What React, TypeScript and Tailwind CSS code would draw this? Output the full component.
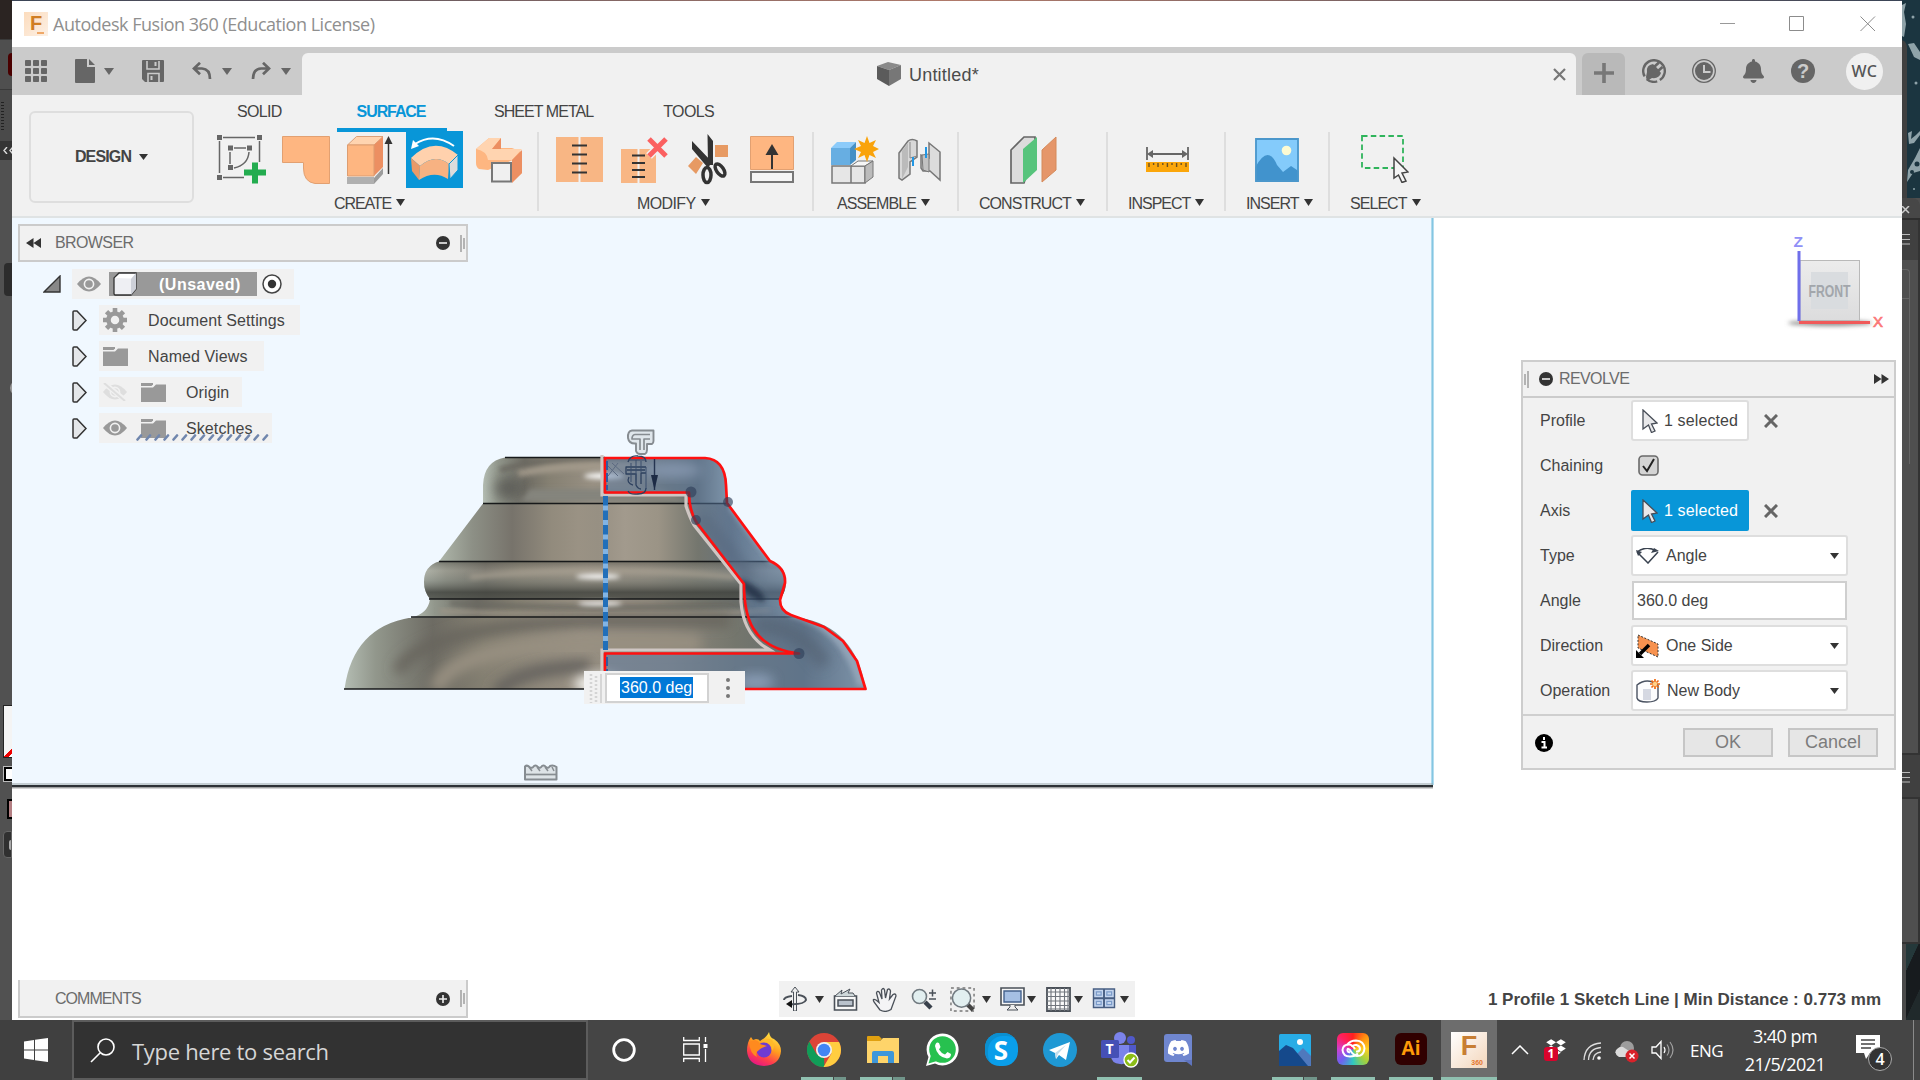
import React from "react";
import { FaDiscord, FaDropbox, FaBell } from "react-icons/fa";

type IconProps = { className?: string; box: string; children: React.ReactNode };

function Icon({ className = "", box, children }: IconProps) {
  return (
    <svg viewBox={box} className={"block shrink-0 " + className} fill="none">
      {children}
    </svg>
  );
}

function Caret({ className = "", size = "h-[7px] w-[10px]" }: { className?: string; size?: string }) {
  return (
    <svg viewBox="0 0 10 7" preserveAspectRatio="none" className={"block shrink-0 " + size + " " + className}>
      <path d="M0 0H10L5 7Z" fill="currentColor" />
    </svg>
  );
}

/* ---------- window chrome ---------- */

function TitleBar() {
  return (
    <div className="flex h-[46px] w-full shrink-0 items-center bg-white pl-3">
      <div className="relative flex h-6 w-6 shrink-0 items-start justify-center bg-gradient-to-br from-[#fcdcbd] to-[#fcf0e5]">
        <span className="mt-px font-['Liberation_Sans'] text-[20px] leading-none font-bold text-[#d07d22]">F</span>
        <span className="absolute right-[4px] bottom-[2px] h-[2px] w-[7px] bg-[#efa868]" />
      </div>
      <span className="ml-[5px] font-['Open_Sans',sans-serif] text-[18px] tracking-[-0.48px] whitespace-nowrap text-[#8f8f8f]">
        Autodesk Fusion 360 (Education License)
      </span>
      <div className="ml-auto flex items-center pr-[26px]">
        <Icon box="0 0 16 16" className="h-4 w-4">
          <path d="M0 7.5H15" stroke="#999" />
        </Icon>
        <Icon box="0 0 16 16" className="ml-[53px] h-4 w-4">
          <path d="M.5 .5H14.5V14.5H.5Z" stroke="#8c8c8c" />
        </Icon>
        <Icon box="0 0 16 16" className="ml-[55px] h-4 w-4">
          <path d="M.5 .5L15 15M15 .5L.5 15" stroke="#8c8c8c" />
        </Icon>
      </div>
    </div>
  );
}

function TabStrip() {
  const cells = [0, 8, 16];
  return (
    <div className="flex h-12 w-full shrink-0 items-end bg-[#cbcbcb] text-[#666]">
      <div className="flex h-12 w-[290px] items-center pl-[13px]">
        <Icon box="0 0 22 22" className="h-[22px] w-[22px]">
          {cells.map((y) => cells.map((x) => <rect key={x + "-" + y} x={x} y={y} width="6" height="6" rx=".8" fill="#666" />))}
        </Icon>
        <Icon box="0 0 20 24" className="ml-[28px] h-6 w-5">
          <path d="M1 0H12V8H20V23Q20 24 19 24H1Q0 24 0 23V1Q0 0 1 0ZM14 0L20 6H14Z" fill="#666" />
        </Icon>
        <Caret className="ml-[9px]" />
        <Icon box="0 0 22 22" className="ml-[28px] h-[22px] w-[22px]">
          <path d="M1 0H21Q22 0 22 1V21Q22 22 21 22H3L0 19V1Q0 0 1 0Z" fill="#666" />
          <path d="M5 1V9H17V1M6 22V13.5H17V22" stroke="#cbcbcb" strokeWidth="1.6" />
          <rect x="12.5" y="2" width="2" height="4" fill="#cbcbcb" />
          <rect x="8.5" y="16" width="2" height="4" fill="#cbcbcb" />
        </Icon>
        <Icon box="0 0 20 18" className="ml-[28px] h-[18px] w-5">
          <path d="M8 .8L2 6.5L8 12.2M2.5 6.5H10Q18 7 18 17" stroke="#666" strokeWidth="2.7" />
        </Icon>
        <Caret className="ml-[10px]" />
        <Icon box="0 0 20 18" className="ml-[19px] h-[18px] w-5">
          <path d="M12 .8L18 6.5L12 12.2M17.5 6.5H10Q2 7 2 17" stroke="#666" strokeWidth="2.7" />
        </Icon>
        <Caret className="ml-[10px]" />
      </div>
      <div className="flex h-[42px] w-[1274px] items-center rounded-t-md bg-[#f1f1f1] pl-[575px]">
        <Icon box="0 0 24 24" className="h-6 w-6">
          <path d="M0 4L11 0L24 3L12 8Z" fill="#8a8a8a" />
          <path d="M0 4L12 8V24L0 17Z" fill="#5b5b5b" />
          <path d="M12 8L24 3V17L12 24Z" fill="#777" />
        </Icon>
        <span className="mt-[2px] ml-2 font-['Liberation_Sans',sans-serif] text-[18px] tracking-[0.2px] text-[#4b4b4b]">Untitled*</span>
        <Icon box="0 0 13 13" className="mr-[10px] ml-auto h-[13px] w-[13px]">
          <path d="M1 1L12 12M12 1L1 12" stroke="#777" strokeWidth="2.2" />
        </Icon>
      </div>
      <div className="ml-[6px] flex h-[42px] w-[43px] items-center justify-center rounded-t-md bg-[#b9b9b9]">
        <Icon box="0 0 20 20" className="mb-[2px] h-5 w-5">
          <path d="M10 0V20M0 10H20" stroke="#777" strokeWidth="3.6" />
        </Icon>
      </div>
      <div className="flex h-12 items-center pl-[17px]">
        <Icon box="0 0 24 24" className="h-6 w-6">
          <circle cx="12" cy="12" r="10.800" stroke="#666" strokeWidth="2.400" strokeDasharray="50 3 11 4" transform="rotate(150 12 12)" />
          <path d="M5 13Q4 6 11 5L15 9L19 14Q17 20 10 19L5 22L4 18Z" fill="#666" />
          <path d="M12 8L17 3.500M16 12L20.500 8" stroke="#666" strokeWidth="2.600" />
        </Icon>
        <Icon box="0 0 24 24" className="ml-[26px] h-6 w-6">
          <circle cx="12" cy="12" r="11.3" stroke="#666" strokeWidth="1.3" />
          <circle cx="12" cy="12" r="9" fill="#666" />
          <path d="M12 6V13H18.5" stroke="#cbcbcb" strokeWidth="2" />
        </Icon>
        <FaBell className="ml-[27px] h-6 w-[21px] text-[#666]" />
        <div className="ml-[27px] flex h-6 w-6 items-center justify-center rounded-full bg-[#666] font-['Liberation_Sans'] text-[20px] leading-none font-bold text-[#cbcbcb]">
          ?
        </div>
        <div className="ml-[31px] flex h-[37px] w-[37px] items-center justify-center rounded-full bg-[#f0f0f0] font-['Noto_Sans'] text-[16px] font-medium tracking-[0.5px] text-[#555]">
          WC
        </div>
      </div>
    </div>
  );
}

/* ---------- ribbon ---------- */

function Label({ className, children }: { className: string; children: string }) {
  return (
    <div className={"mt-[6px] flex shrink-0 items-center gap-[5px] font-['Liberation_Sans',sans-serif] text-[16px] leading-5 whitespace-nowrap text-[#444] " + className}>
      <span>{children}</span>
      <Caret className="-mt-[4px] text-[#333]" size="h-[7px] w-[9px]" />
    </div>
  );
}

function Tools({ className, children }: { className: string; children: React.ReactNode }) {
  return <div className={"-mt-px flex h-[57px] shrink-0 items-center " + className}>{children}</div>;
}

function Ribbon() {
  return (
    <div className="flex h-[123px] w-full shrink-0 border-b-2 border-[#dfe3e4] bg-[#f1f1f1]">
      <div className="mt-[16px] ml-[17px] flex h-[92px] w-[165px] shrink-0 items-center justify-center rounded-md border-2 border-[#dedede]">
        <span className="font-['Liberation_Sans',sans-serif] text-[16px] font-bold tracking-[-0.85px] text-[#444]">DESIGN</span>
        <Caret className="ml-[8px] text-[#333]" size="h-[6px] w-[9px]" />
      </div>
      <div className="flex flex-col">
        <div className="flex h-[37px] pt-[7px] font-['Liberation_Sans',sans-serif] text-[16px] leading-5 whitespace-nowrap text-[#444]">
          <span className="ml-[43px] w-[100px] shrink-0 tracking-[-0.7px]">SOLID</span>
          <div className="flex h-[30px] w-[110px] shrink-0 justify-center border-b-4 border-[#0896d8] font-bold tracking-[-1.1px] text-[#0896d8]">
            <span className="-ml-[2px]">SURFACE</span>
          </div>
          <span className="ml-[47px] tracking-[-0.95px]">SHEET METAL</span>
          <span className="ml-[70px] tracking-[-0.6px]">TOOLS</span>
        </div>
        <div className="flex h-[84px]">
          {/* create */}
          <div className="flex h-[79px] w-[345px] flex-col border-r-2 border-[#dedede]">
            <Tools className="pl-[23px]">
              <Icon box="0 0 49 49" className="h-[49px] w-[49px]">
                <path d="M6 2.500H38M2.500 6V38M42.500 6V27M6 42.500H27M17 13H29M13 17V29M32 17Q31 30 17 33" stroke="#666" strokeWidth="1.500" />
                <path d="M0 0h5v5H0zM40 0h5v5H40zM0 40h5v5H0zM11 10.500h5v5h-5zM30 10.500h5v5h-5zM11 30h5v5h-5z" fill="#666" />
                <path d="M35 27.500h6v7h8v6h-8v8h-6v-8h-8v-6h8z" fill="#23ac4f" />
              </Icon>
              <Icon box="0 0 48 48" className="ml-[16px] h-12 w-12">
                <path d="M.5 .5H47.500V47.500H33Q21.500 46 21.500 32V26.500H.5Z" fill="#feb681" stroke="#e2a071" />
              </Icon>
              <Icon box="0 0 48 48" className="ml-[17px] h-12 w-12">
                <path d="M0 42H27L36 32V38L27 48H0Z" fill="#9c9c9c" />
                <path d="M0 41H27V48H0Z" fill="#b0b0b0" />
                <path d="M.5 9L9.500 .5H36L27 9Z" fill="#ffd4b0" stroke="#dca079" />
                <path d="M27 9L36 .5V31L27 40Z" fill="#ec8f62" />
                <path d="M.5 9H27V40H.5Z" fill="#feb681" stroke="#dd9d70" />
                <path d="M41.500 38V5" stroke="#333" strokeWidth="1.500" />
                <path d="M37.500 8L41.500 0L45.500 8Z" fill="#333" />
              </Icon>
              <div className="ml-[11px] flex h-[57px] w-[57px] items-center justify-center bg-[#0896d8]">
                <Icon box="0 0 49 45" className="h-[45px] w-[49px]">
                  <path d="M1 21Q24 -2 48 18L39 27Q25 16 10 29Z" fill="#ffd1ad" />
                  <path d="M1 21L10 29L9 43L2 34Z" fill="#ea9a68" />
                  <path d="M10 29Q25 16 39 27L38 42Q24 33 9 43Z" fill="#f7b282" />
                  <path d="M39 27L48 18V33L40 42Z" fill="#dcdcdc" stroke="#0896d8" />
                  <path d="M44 9Q24 -5 5 7" stroke="white" strokeWidth="2" />
                  <path d="M1 12L3 3L9 9Z" fill="white" />
                </Icon>
              </div>
              <Icon box="0 0 46 46" className="ml-[13px] h-[46px] w-[46px]">
                <path d="M0 12L13 1L25 1V11H36L46 15V36L37 44V23L12 33L3 32Q0 30 0 26Z" fill="#feb681" />
                <path d="M0 12L13 1H25L16 12H46L36 23H12Q11 14 0 12Z" fill="#ffd4b0" />
                <path d="M25 1V12H16ZM36 23L46 13V36L36 46Z" fill="#ec8f62" />
                <path d="M16 26H35V44.500H16Z" fill="#f0f0f0" stroke="#777" strokeWidth="2" />
              </Icon>
            </Tools>
            <Label className="ml-[140px] tracking-[-1.1px]">CREATE</Label>
          </div>
          {/* modify */}
          <div className="flex h-[79px] w-[275px] flex-col border-r-2 border-[#dedede]">
            <Tools className="pl-[17px]">
              <Icon box="0 0 47 45" className="h-[45px] w-[47px]">
                <path d="M0 0H22.500V45H0ZM24.500 0H47V45H24.500Z" fill="#f8b684" />
                <path d="M16 8.500H31M16 17.500H31M16 26.500H31M16 35.500H31" stroke="#333" strokeWidth="2" />
              </Icon>
              <Icon box="0 0 47 47" className="ml-[18px] h-[47px] w-[47px]">
                <path d="M0 13H16.500V47H0ZM18.500 13H35V47H18.500Z" fill="#f8b684" />
                <path d="M11 19.500H24M11 27H24M11 34H24M11 41H24" stroke="#333" strokeWidth="2" />
                <path d="M28 3L45 20M45 3L28 20" stroke="#f1f1f1" strokeWidth="8" />
                <path d="M28 3L45 20M45 3L28 20" stroke="#fb6060" strokeWidth="5" />
              </Icon>
              <Icon box="0 0 42 52" className="ml-[20px] h-[52px] w-[42px]">
                <path d="M27 11H40V23H27ZM8 23L15 29L8 40L0 32Z" fill="#e79a63" />
                <path d="M19.500 0L25 7V31H20ZM4 7L24 28L20 34L4 15Z" fill="#333" />
                <ellipse cx="19" cy="41" rx="4" ry="7.500" stroke="#333" strokeWidth="3.500" />
                <ellipse cx="32" cy="36" rx="3.500" ry="7" stroke="#333" strokeWidth="3.500" transform="rotate(-35 32 36)" />
              </Icon>
              <Icon box="0 0 44 47" className="ml-[20px] h-[47px] w-11">
                <path d="M.5 .5H43.500V33.500H.5Z" fill="#feb681" stroke="#e2a071" />
                <path d="M1 36H43V46H1Z" fill="#f5f5f5" stroke="#777" strokeWidth="2" />
                <path d="M22 33V14" stroke="#333" strokeWidth="2" />
                <path d="M15.500 19L22 8L28.500 19Z" fill="#333" />
              </Icon>
            </Tools>
            <Label className="ml-[98px] tracking-[-0.6px]">MODIFY</Label>
          </div>
          {/* assemble */}
          <div className="flex h-[79px] w-[145px] flex-col border-r-2 border-[#dedede]">
            <Tools className="pl-[17px]">
              <Icon box="0 0 48 48" className="h-12 w-12">
                <path d="M1 30H20V47H1ZM20 30H34V47H20Z" fill="#e6e6e6" stroke="#777" strokeWidth="1.500" />
                <path d="M20 30L27 25H42L34 30Z" fill="#f6f6f6" stroke="#777" />
                <path d="M34 30L42 25V41L34 47Z" fill="#bbb" stroke="#777" />
                <path d="M0 12H19V29H0Z" fill="#67aee2" />
                <path d="M0 12L6 6H25L19 12Z" fill="#8ccbfa" />
                <path d="M19 12L25 6V24L19 29Z" fill="#4590c6" />
                <path d="M36 0L38.500 7L45 4L42 10L48 13L42 16L45 22L38.500 19L36 26L33.500 19L27 22L30 16L23 13L30 10L27 4L33.500 7Z" fill="#f9a30b" />
              </Icon>
              <Icon box="0 0 43 44" className="ml-[19px] h-11 w-[43px]">
                <path d="M1 15L10 3Q14 0 19 3V19L12 24V36L4 42L1 40Z" fill="#d8d8d8" stroke="#777" strokeWidth="1.500" />
                <path d="M10 5V29L4 41V13Z" fill="#bbb" />
                <path d="M12 4V20L19 18" stroke="#888" />
                <path d="M31 5L42 14V42L32 33H25L23 30V17L31 20Z" fill="#dcdcdc" stroke="#777" strokeWidth="1.500" />
                <path d="M24 17L31 16V34L25 32Z" fill="#c2c2c2" stroke="#777" />
                <path d="M15 19V28M28 9V20" stroke="#2196e3" strokeWidth="2" />
              </Icon>
            </Tools>
            <Label className="ml-[23px] tracking-[-0.9px]">ASSEMBLE</Label>
          </div>
          {/* construct */}
          <div className="flex h-[79px] w-[149px] flex-col border-r-2 border-[#dedede]">
            <Tools className="pl-[51px]">
              <Icon box="0 0 47 48" className="h-12 w-[47px]">
                <path d="M1 14L14 1H25V14L14 47H1Z" fill="#dcdcdc" stroke="#666" strokeWidth="1.700" />
                <path d="M13 13L27 1V34L13 47Z" fill="#57c47c" />
                <path d="M32 14L46 1V34L32 46Z" fill="#e5966a" stroke="#d58a5a" />
              </Icon>
            </Tools>
            <Label className="ml-[20px] tracking-[-0.95px]">CONSTRUCT</Label>
          </div>
          {/* inspect */}
          <div className="flex h-[79px] w-[118px] flex-col border-r-2 border-[#dedede]">
            <Tools className="pl-[38px]">
              <Icon box="0 0 43 25" className="h-[25px] w-[43px]">
                <path d="M1 0V13M42 0V13M3 7H40" stroke="#666" strokeWidth="1.800" />
                <path d="M1 7L7 3V11ZM42 7L36 3V11Z" fill="#666" />
                <path d="M0 15H43V25H0Z" fill="#fba60a" />
                <path d="M3 16V20M7.600 16V18M12 16V20M16.800 16V18M21.400 16V20M26 16V18M30.600 16V20M35.200 16V18M40 16V20" stroke="#6b5020" strokeWidth="1.400" />
              </Icon>
            </Tools>
            <Label className="ml-[20px] tracking-[-1px]">INSPECT</Label>
          </div>
          {/* insert */}
          <div className="flex h-[79px] w-[104px] flex-col border-r-2 border-[#dedede]">
            <Tools className="pl-[29px]">
              <Icon box="0 0 44 44" className="h-11 w-11">
                <path d="M.5 .5H43.500V43.500H.5Z" fill="#84cbfb" />
                <path d="M.5 29Q13 6 22 27L28 34L36 28L43.500 33V43.500H.5Z" fill="#4193cd" />
                <path d="M1 1H43V43H1Z" stroke="#4b97cb" strokeWidth="1.800" />
                <circle cx="31.500" cy="12.500" r="4.800" fill="#fdfbd3" />
              </Icon>
            </Tools>
            <Label className="ml-[20px] tracking-[-0.95px]">INSERT</Label>
          </div>
          {/* select */}
          <div className="flex h-[79px] w-[130px] flex-col">
            <Tools className="pl-[31px]">
              <Icon box="0 0 48 48" className="mb-px h-12 w-12">
                <path d="M1 1H42V33H1Z" stroke="#2fb45b" strokeWidth="1.800" strokeDasharray="5.500 3.300" />
                <path d="M33 23L47 37L41 38L45 46L41 47.500L37.500 40L33 43Z" fill="#f5f5f5" stroke="#444" strokeWidth="1.500" />
              </Icon>
            </Tools>
            <Label className="ml-[20px] tracking-[-0.95px]">SELECT</Label>
          </div>
        </div>
      </div>
    </div>
  );
}

/* ---------- canvas drawing ---------- */

const BODY =
  "M505 457.500Q484 461 483 485V503.500L439 561.500Q424 566 424 582Q424 592 430 599Q428 614 411 617.500Q353 627 344.500 689H865.500Q856 627 799 617.500Q782 614 780 599Q786 592 786 582Q786 566 771 561.500L727 503.500V485Q726 461 705 457.500Z";
const OUTER = "L705 458Q725 459 726 485L727 503L770 561Q786 568 785 583L780 600Q780 611 791 615L824 627L843 641L857 661L865.500 689";
const INNER = "L799 653.500C750 648 744 615 744 584L697 523Q689 511 689 492.500H605";

function ModelDrawing() {
  return (
    <svg viewBox="12 218 1890 802" className="absolute inset-0 h-full w-full">
      <defs>
        <linearGradient id="metal">
          <stop offset="0" stopColor="#b4bdb3" />
          <stop offset=".06" stopColor="#92978c" />
          <stop offset=".17" stopColor="#6d6b63" />
          <stop offset=".27" stopColor="#858072" />
          <stop offset=".45" stopColor="#989083" />
          <stop offset=".62" stopColor="#8e887c" />
          <stop offset=".75" stopColor="#74766d" />
          <stop offset=".88" stopColor="#666d6e" />
          <stop offset="1" stopColor="#9eaaab" />
        </linearGradient>
        <linearGradient id="cone">
          <stop offset="0" stopColor="#aeb6aa" />
          <stop offset=".1" stopColor="#8d9086" />
          <stop offset=".22" stopColor="#77736b" />
          <stop offset=".34" stopColor="#928b7d" />
          <stop offset=".42" stopColor="#9a9284" />
          <stop offset=".48" stopColor="#979083" />
          <stop offset=".56" stopColor="#a29a8d" />
          <stop offset=".66" stopColor="#9b9486" />
          <stop offset=".78" stopColor="#74766e" />
          <stop offset=".88" stopColor="#6a7379" />
          <stop offset="1" stopColor="#9aa6a7" />
        </linearGradient>
        <linearGradient id="bulge" x2="0" y2="1">
          <stop offset="0" stopColor="#55544c" stopOpacity=".5" />
          <stop offset=".25" stopColor="#a7a095" stopOpacity=".35" />
          <stop offset=".5" stopColor="#7d7f77" stopOpacity=".5" />
          <stop offset=".8" stopColor="#42443f" stopOpacity=".85" />
          <stop offset="1" stopColor="#4b4d47" stopOpacity=".8" />
        </linearGradient>
        <clipPath id="body">
          <path d={BODY} />
        </clipPath>
        <clipPath id="profile">
          <path d={"M605 458" + OUTER + "H605V653.500" + INNER + "Z"} />
        </clipPath>
        <filter id="soft" x="-50%" y="-50%" width="200%" height="200%">
          <feGaussianBlur stdDeviation="6" />
        </filter>
        <filter id="glow" x="-50%" y="-100%" width="200%" height="300%">
          <feGaussianBlur stdDeviation="2.500" />
        </filter>
      </defs>
      <rect x="12" y="218" width="1421" height="568" fill="#f0f8ff" />
      <path d="M1432.500 218V785" stroke="#84c6e2" strokeWidth="2.200" />
      <path d="M12 784H1433" stroke="#9aa5a8" strokeWidth="1" />
      <path d="M12 786.200H1433" stroke="#2e3236" strokeWidth="2.600" />
      <path d="M12 788H1433" stroke="#aaa" />

      <g clipPath="url(#body)">
        <rect x="483" y="457" width="244" height="47" fill="url(#metal)" />
        <path d="M500 470Q550 456 640 459" stroke="#6b6860" strokeWidth="5" filter="url(#glow)" fill="none" />
        <path d="M518 474Q560 464 640 467" stroke="#a39a8b" strokeWidth="7" filter="url(#glow)" fill="none" />
        <ellipse cx="509" cy="488" rx="14" ry="12" fill="#5c5c57" opacity=".85" filter="url(#soft)" />
        <path d="M530 489H660L690 502H520Z" fill="#84847d" filter="url(#glow)" />
        <ellipse cx="604" cy="476" rx="20" ry="3" fill="white" filter="url(#glow)" />
        <rect x="439" y="504" width="332" height="58" fill="url(#cone)" />
        <rect x="424" y="561" width="362" height="39" fill="url(#metal)" />
        <rect x="424" y="561" width="362" height="39" fill="url(#bulge)" />
        <path d="M470 577Q600 565 735 577" stroke="#a59e90" strokeWidth="4" filter="url(#glow)" fill="none" />
        <ellipse cx="598" cy="576.500" rx="22" ry="2.600" fill="white" filter="url(#glow)" />
        <rect x="411" y="599" width="389" height="19" fill="url(#metal)" />
        <path d="M440 611Q600 619 770 611" stroke="#a09889" strokeWidth="4" filter="url(#glow)" fill="none" />
        <path d="M450 603Q600 612 750 603" stroke="#696860" strokeWidth="4" filter="url(#glow)" fill="none" />
        <ellipse cx="600" cy="603.500" rx="22" ry="2" fill="white" filter="url(#glow)" />
        <rect x="344" y="618" width="522" height="72" fill="url(#metal)" />
        <path d="M398 672Q422 624 600 621H730" stroke="#68655d" strokeWidth="12" filter="url(#soft)" fill="none" />
        <path d="M436 690Q450 644 605 643H700" stroke="#989081" strokeWidth="15" filter="url(#soft)" fill="none" />
        <path d="M496 694Q516 668 590 666" stroke="#66645e" strokeWidth="14" filter="url(#soft)" fill="none" />
        <ellipse cx="598" cy="684" rx="24" ry="10" fill="#f6f5f1" filter="url(#soft)" />
      </g>
      <path d="M505 457.500H605M483 503.500H726M439 561.500H770M429 599H780M411 617H795M344 689H605" stroke="#17191a" strokeWidth="1.600" />
      <g clipPath="url(#profile)">
        <rect x="600" y="450" width="270" height="245" fill="#597ba8" fillOpacity=".48" />
        <ellipse cx="672" cy="470" rx="30" ry="7" fill="#8596ae" filter="url(#soft)" />
        <path d="M732 505L775 562M790 612Q845 625 862 685" stroke="#9aaabd" strokeWidth="9" opacity=".8" fill="none" filter="url(#glow)" />
        <path d="M700 515L752 580" stroke="#55657a" strokeWidth="14" opacity=".5" fill="none" filter="url(#soft)" />
        <ellipse cx="752" cy="591" rx="16" ry="5" fill="#1f2b40" opacity=".75" transform="rotate(38 752 591)" filter="url(#glow)" />
        <path d="M755 625Q800 625 825 665" stroke="#556375" strokeWidth="16" opacity=".7" fill="none" filter="url(#soft)" />
        <ellipse cx="756" cy="682" rx="18" ry="8" fill="#93a6c0" opacity=".8" filter="url(#soft)" />
      </g>

      <path d="M602 455V495H686V506Q690 518 694 525L741 584V602Q743 630 762 645L770 650H602V672" fill="none" stroke="#cfc6c3" strokeWidth="3.200" />
      <path d={"M605 689V653.500" + INNER + "V458" + OUTER + "H745"} fill="none" stroke="#ff1010" strokeWidth="2.700" strokeLinejoin="round" />
      <path d="M605.500 496V650" stroke="#82b4e4" strokeWidth="5" />
      <path d="M605.500 496V650" stroke="#226fb9" strokeWidth="5" strokeDasharray="9.500 5" />
      <path d="M607 461V490M607 657V672" stroke="#315ba0" strokeWidth="2" strokeDasharray="9 3" />
      <g fill="#2f3f59" fillOpacity=".65">
        <circle cx="691" cy="492" r="5.500" />
        <circle cx="696" cy="520" r="5" />
        <circle cx="728" cy="502" r="5" />
        <circle cx="799" cy="653.500" r="5.500" />
      </g>

      {/* sketch constraint glyphs */}
      <g strokeLinejoin="round" fill="none">
        <path d="M653.500 430.500H632Q627.500 431 628 438Q629 444 636 443.500V451Q637 454 640 454H645Q647 453 647 450V444H652Q653.500 443 653.500 441Z" fill="#dfe6eb" stroke="#868c91" strokeWidth="1.900" />
        <path d="M650 434.500H635Q632 435 632 439H640V450M650 439H644V450" stroke="#868c91" strokeWidth="1.700" />
        <path d="M628 462Q630 455 638 456Q646 456 646 462M646 467H626V474H636V485Q638 489 641 489M646 473H641V484M628 491Q630 495 638 494Q646 494 646 488M627 470H645M629 477Q626 483 633 485" stroke="#2d405e" strokeWidth="1.300" />
        <path d="M628 460H646M631 463V482M636 460V480M641 461V472M646 467V489" stroke="#3b4e6d" strokeWidth="1" />
        <path d="M654.500 459V490" stroke="#253450" strokeWidth="1.400" />
        <path d="M651 475H658L654.500 490Z" fill="#1d2b45" />
        <path d="M608 466L618 476M612 463L624 474M618 463L608 476" stroke="#5c6a81" />
        <path d="M525 766.500Q527 764.500 529.500 767Q532 769 534 766Q536 764.500 538 767Q540 769 542 766Q544 764.500 546 767Q548 769 550 766Q553 764.500 556.500 767V779.500H525Z" fill="#dde3e7" stroke="#868c91" strokeWidth="2" />
        <path d="M526 774.500H556" stroke="#868c91" strokeWidth="1.700" />
        <path d="M529 767L532 771M537 767L540 771M545 767L548 771M552 767L554 771" stroke="#868c91" strokeWidth="1.500" />
      </g>
    </svg>
  );
}

/* ---------- panels ---------- */

function RoundMark({ plus = false }: { plus?: boolean }) {
  return (
    <Icon box="0 0 14 14" className="h-[14px] w-[14px]">
      <circle cx="7" cy="7" r="7" fill="#333" />
      <path d={plus ? "M3 7H11M7 3V11" : "M3 7H11"} stroke="#f1f1f1" strokeWidth="1.600" />
    </Icon>
  );
}

function Grip({ className = "" }: { className?: string }) {
  return (
    <Icon box="0 0 5 17" className={"h-[17px] w-[5px] " + className}>
      <path d="M1 0V17M4 3V14" stroke="#8a8a8a" strokeWidth="1.200" />
    </Icon>
  );
}

function Eye({ off = false }: { off?: boolean }) {
  const tone = off ? "#dedede" : "#999";
  return (
    <Icon box="0 0 24 18" className="h-[18px] w-6">
      <path d="M0 9Q12 -6 24 9Q12 24 0 9Z" fill={tone} />
      <circle cx="12" cy="9" r="4.600" stroke="#f1f1f1" strokeWidth="1.600" />
      {off && <path d="M1 0L23 18" stroke="#f1f1f1" strokeWidth="5" />}
      {off && <path d="M1 0L22 18" stroke="#dedede" strokeWidth="2" />}
    </Icon>
  );
}

function Folder() {
  return (
    <Icon box="0 0 25 20" className="h-5 w-[25px]">
      <path d="M0 1H12V2.500L10.500 4H0Z" fill="#999" />
      <path d="M0 5.500H12L15 2.500H25V20H0Z" fill="#999" />
    </Icon>
  );
}

function Gear() {
  return (
    <Icon box="-12 -12 24 24" className="mr-px h-6 w-6">
      <circle r="6.500" stroke="#999" strokeWidth="4.500" />
      {[0, 45, 90, 135].map((a) => (
        <path key={a} d="M0 -12V-7M0 7V12" stroke="#999" strokeWidth="4.600" transform={`rotate(${a})`} />
      ))}
    </Icon>
  );
}

function Branch({ width, text, icons, children }: { width: string; text: string; icons: React.ReactNode; children?: React.ReactNode }) {
  return (
    <div className="mb-[6px] flex h-[30px] items-center pl-[54px]">
      <Icon box="0 0 15 21" className="h-[21px] w-[15px]">
        <path d="M1 2Q1 1 2 1H5L14 10.500L5 20H2Q1 20 1 19Z" fill="#e4e7ea" stroke="#333" strokeWidth="1.500" />
      </Icon>
      <div className={"relative ml-3 flex h-[30px] items-center bg-[#f1f1f1] pl-1 " + width}>
        {icons}
        <span className="mt-px ml-[20px] font-['Liberation_Sans',sans-serif] text-[16px] tracking-[0.1px] whitespace-nowrap text-[#444]">{text}</span>
        {children}
      </div>
    </div>
  );
}

function BrowserColumn() {
  return (
    <div className="relative flex h-full w-[456px] shrink-0 flex-col pt-[6px] pl-[6px]">
      <div className="flex h-[38px] shrink-0 items-center border-2 border-[#cbcbcb] bg-[#f1f1f1] pl-[6px]">
        <Icon box="0 0 15 10" className="h-[10px] w-[15px]">
          <path d="M7.500 0V10L0 5ZM15 0V10L7.500 5Z" fill="#333" />
        </Icon>
        <span className="ml-[14px] font-['Liberation_Sans',sans-serif] text-[16px] tracking-[-0.6px] text-[#6c6c6c]">BROWSER</span>
        <div className="ml-auto flex items-center">
          <RoundMark />
          <Grip className="mr-px ml-[10px]" />
        </div>
      </div>
      <div className="mt-[7px] mb-[6px] flex h-[30px] items-center pl-[25px]">
        <Icon box="0 0 18 18" className="h-[18px] w-[18px]">
          <path d="M17 1V17H1Z" fill="#888" stroke="#333" strokeWidth="1.400" />
        </Icon>
        <div className="ml-[11px] flex h-[30px] w-[222px] items-center bg-[#f1f1f1] pl-[5px]">
          <Eye />
          <div className="ml-[8px] flex h-6 w-[148px] items-center bg-[#999] pl-1">
            <Icon box="0 0 24 24" className="h-6 w-6">
              <path d="M1 6L6 1H23V17L18 23H2L1 22Z" fill="#eeeff3" stroke="#333" strokeWidth="1.300" />
              <path d="M18 7L23 1V17L18 23Z" fill="#cdd0d8" />
              <path d="M2 6L7 2H22L18 6.500Z" fill="white" />
            </Icon>
            <span className="mt-px ml-[22px] font-['Liberation_Sans',sans-serif] text-[16px] font-bold tracking-[0.5px] text-white">(Unsaved)</span>
          </div>
          <Icon box="0 0 20 20" className="ml-[5px] h-5 w-5">
            <circle cx="10" cy="10" r="9" fill="white" stroke="#444" strokeWidth="1.500" />
            <circle cx="10" cy="10" r="4.200" fill="#333" />
          </Icon>
        </div>
      </div>
      <Branch width="w-[201px]" text="Document Settings" icons={<Gear />} />
      <Branch width="w-[165px]" text="Named Views" icons={<Folder />} />
      <Branch width="w-[143px]" text="Origin" icons={<><Eye off /><span className="w-[14px]" /><Folder /></>} />
      <Branch width="w-[173px]" text="Sketches" icons={<><Eye /><span className="w-[14px]" /><Folder /></>}>
        <svg viewBox="0 0 133 7" className="absolute bottom-[2px] left-[37px] h-[7px] w-[133px]">
          {Array.from({ length: 15 }, (_, i) => (
            <path key={i} d={`M${i * 9 + 1.5} 5.500L${i * 9 + 5} 1.500`} stroke="#7086ad" strokeWidth="2.600" strokeLinecap="round" />
          ))}
        </svg>
      </Branch>
      <div className="mt-auto mb-[2px] flex h-[38px] items-center border-x-2 border-b-2 border-[#cbcbcb] bg-[#f1f1f1] pl-[35px]">
        <span className="mt-[2px] font-['Liberation_Sans',sans-serif] text-[16px] tracking-[-0.95px] text-[#6c6c6c]">COMMENTS</span>
        <div className="ml-auto flex items-center pt-px">
          <RoundMark plus />
          <Grip className="mr-px ml-[10px]" />
        </div>
      </div>
    </div>
  );
}

function NavToolbar() {
  const stroke = "#4a5058";
  return (
    <div className="mb-[3px] ml-[311px] flex h-9 w-[356px] shrink-0 items-center self-end bg-[#f1f1f1] pl-1 text-[#333]">
      <Icon box="0 0 24 24" className="h-6 w-6">
        <path d="M10.500 24V5H8L12 0L16 5H13.500V24Z" fill="#eee" stroke={stroke} />
        <path d="M15 8Q23 9 23 13Q21 18 5 17M9 9Q1 10 1 13" stroke={stroke} strokeWidth="2" />
        <path d="M3 17L9 13V21Z" fill="#111" />
      </Icon>
      <Caret className="ml-[8px]" size="h-[7px] w-[9px]" />
      <Icon box="0 0 25 25" className="ml-[9px] h-[25px] w-[25px]">
        <path d="M1.500 9H23.500V23H1.500Z" fill="#f8f8f8" stroke={stroke} strokeWidth="1.600" />
        <path d="M2 9L9 3L8 7L17 2L15 6H20L22 9" fill="#cfd8da" stroke={stroke} />
        <path d="M5 13H20V19H5Z" fill="#b9c2cc" stroke={stroke} strokeWidth="1.500" />
      </Icon>
      <Icon box="0 0 25 25" className="ml-[14px] h-[25px] w-[25px]">
        <path d="M8 23L2 15Q0 11 4 13L7 15.500L4.500 6Q5.500 3 7.500 5.500L10 12L9.500 3Q11.500 0 12.500 3L13.500 11L15.500 2.500Q17.500 1 18.500 4L17.500 12L21 7.500Q24 6 24 9L19 22.500Q14 26 8 23Z" fill="#f4f4f6" stroke={stroke} strokeWidth="1.300" />
      </Icon>
      <Icon box="0 0 25 24" className="ml-[14px] h-6 w-[25px]">
        <path d="M14 15L20 21" stroke="#39414c" strokeWidth="4.500" />
        <circle cx="8.500" cy="9.500" r="7" fill="#e2eff0" stroke="#717a80" strokeWidth="1.600" />
        <path d="M18 6H25M21.500 2.500V9.500M18 12H25" stroke={stroke} strokeWidth="1.500" />
      </Icon>
      <Icon box="0 0 26 26" className="ml-[14px] h-[25px] w-[25px]">
        <path d="M1 1H25V25H1Z" stroke="#777" strokeDasharray="3 3" strokeWidth="1.500" />
        <path d="M18 18L24 24" stroke="#444" strokeWidth="4.500" />
        <circle cx="12" cy="11.500" r="9.500" fill="#e2eff0" stroke="#717a80" strokeWidth="1.600" />
      </Icon>
      <Caret className="ml-[7px]" size="h-[7px] w-[9px]" />
      <Icon box="0 0 25 24" className="ml-[9px] h-6 w-[25px]">
        <path d="M1 1H24V18H1Z" fill="#f6f6f6" stroke={stroke} strokeWidth="1.600" />
        <path d="M4 4H21V15H4Z" fill="#a5bfe3" stroke="#44618c" strokeWidth="1.400" />
        <path d="M10 18V20L7 23H18L15 20V18" fill="#eee" stroke={stroke} />
      </Icon>
      <Caret className="ml-[2px]" size="h-[7px] w-[9px]" />
      <Icon box="0 0 25 25" className="ml-[10px] h-[25px] w-[25px]">
        <path d="M1 1H24V24H1Z" fill="#fafafa" stroke={stroke} strokeWidth="1.800" />
        <path d="M5 1V24M9.500 1V24M14 1V24M18.500 1V24M22 1V24M1 5H24M1 9.500H24M1 14H24M1 18.500H24M1 22H24" stroke="#71767d" strokeWidth="1.100" />
      </Icon>
      <Caret className="ml-[3px]" size="h-[7px] w-[9px]" />
      <Icon box="0 0 24 22" className="mb-[2px] ml-[9px] h-[21px] w-6">
        <path d="M1 1H23V20.500H1Z" fill="#c5d6ef" stroke="#475e82" strokeWidth="1.500" />
        <path d="M12 1V21M1 10.800H23" stroke="#475e82" strokeWidth="2" />
        <path d="M4 4H9V7.500H4ZM15 4H20V7.500H15ZM4 14H9V17.500H4ZM15 14H20V17.500H15Z" stroke="#7b9bc9" strokeWidth="1.300" />
      </Icon>
      <Caret className="ml-[4px]" size="h-[7px] w-[9px]" />
    </div>
  );
}

function Pointer() {
  return (
    <Icon box="0 0 16 24" className="h-6 w-4">
      <path d="M1 1L15 14L9.500 15L13 22L9.500 23.500L6.500 16L1 20Z" fill="#e8e8ea" stroke="#474d57" strokeWidth="1.300" />
    </Icon>
  );
}

function Cross() {
  return (
    <Icon box="0 0 14 14" className="ml-[15px] h-[14px] w-[14px]">
      <path d="M1 1L13 13M13 1L1 13" stroke="#666" strokeWidth="3" />
    </Icon>
  );
}

function Row({ label, children }: { label: string; children: React.ReactNode }) {
  return (
    <div className="flex h-[45px] shrink-0 items-center pl-[17px]">
      <span className="w-[91px] shrink-0">{label}</span>
      {children}
    </div>
  );
}

function Dropdown({ text, icon }: { text: string; icon: React.ReactNode }) {
  return (
    <div className="flex h-[41px] w-[217px] items-center rounded-[3px] border-2 border-[#dedede] bg-white pl-[3px]">
      {icon}
      <span className="ml-[7px]">{text}</span>
      <Caret className="mr-[7px] ml-auto text-[#333]" size="h-[6px] w-[9px]" />
    </div>
  );
}

function RevolvePanel() {
  return (
    <div className="mt-[25px] flex h-[410px] w-[375px] shrink-0 flex-col border-2 border-[#cdcdcd] bg-[#f1f1f1] font-['Liberation_Sans',sans-serif] text-[16px] text-[#444]">
      <div className="flex h-[36px] shrink-0 items-center border-b-2 border-[#cbcbcb] pl-px">
        <Grip className="rotate-180" />
        <span className="w-[10px]" />
        <RoundMark />
        <span className="ml-[6px] tracking-[-0.6px] text-[#6c6c6c]">REVOLVE</span>
        <Icon box="0 0 15 10" className="mr-[5px] ml-auto h-[10px] w-[15px]">
          <path d="M0 0V10L7.500 5ZM7.500 0V10L15 5Z" fill="#333" />
        </Icon>
      </div>
      <Row label="Profile">
        <div className="flex h-[41px] w-[118px] items-center rounded-[3px] border-2 border-[#dedede] bg-white pl-[9px]">
          <Pointer />
          <span className="ml-[6px] tracking-[0.12px] whitespace-nowrap">1 selected</span>
        </div>
        <Cross />
      </Row>
      <Row label="Chaining">
        <Icon box="0 0 21 21" className="mb-px ml-[7px] h-[21px] w-[21px]">
          <rect x="1" y="1" width="19" height="19" rx="3.500" fill="#d4d4d4" stroke="#6a6a6a" strokeWidth="1.600" />
          <path d="M5 11L9 16L16 4" stroke="#222" strokeWidth="2" />
        </Icon>
      </Row>
      <Row label="Axis">
        <div className="flex h-[41px] w-[118px] items-center rounded-[2px] bg-[#0896d8] pl-[11px] text-white">
          <Pointer />
          <span className="ml-[6px] tracking-[0.12px] whitespace-nowrap">1 selected</span>
        </div>
        <Cross />
      </Row>
      <Row label="Type">
        <Dropdown
          text="Angle"
          icon={
            <Icon box="0 0 23 16" className="h-4 w-[23px]">
              <path d="M1 4L12 15L22 4M1 4Q11 -3 20 3" stroke="#3a4350" strokeWidth="1.500" />
              <path d="M0 2L6 4L2 8ZM23 3L15 5L18 0Z" fill="#3a4350" />
            </Icon>
          }
        />
      </Row>
      <Row label="Angle">
        <div className="ml-px flex h-[39px] w-[215px] items-center border-2 border-[#cfcfcf] bg-white pl-[3px]">360.0 deg</div>
      </Row>
      <Row label="Direction">
        <Dropdown
          text="One Side"
          icon={
            <Icon box="0 0 23 24" className="h-6 w-[23px]">
              <path d="M2 1L22 10V23L2 14Z" fill="#f7924f" stroke="#333" strokeDasharray="2 1.500" />
              <path d="M13 11L4 20" stroke="#000" strokeWidth="3.500" />
              <path d="M0 16V24H8Z" fill="#000" />
            </Icon>
          }
        />
      </Row>
      <Row label="Operation">
        <Dropdown
          text="New Body"
          icon={
            <Icon box="0 0 24 24" className="h-6 w-6">
              <path d="M1 6Q11 -2 22 6V19Q20 23 11 23Q2 23 1 19Z" fill="#fcfcfd" stroke="#4b5362" strokeWidth="1.400" />
              <path d="M7 10H15V21H7Z" fill="#d5d8e2" />
              <path d="M19 0V10M14 5H24M15.500 1.500L22.500 8.500M22.500 1.500L15.500 8.500" stroke="#f06a10" strokeWidth="1.700" />
              <circle cx="19" cy="5" r="2.200" fill="#ffd28a" />
            </Icon>
          }
        />
      </Row>
      <div className="mt-px flex flex-1 items-center border-t-2 border-[#cfcfcf] pt-px pl-[12px]">
        <Icon box="0 0 18 18" className="h-[18px] w-[18px]">
          <circle cx="9" cy="9" r="9" fill="#000" />
          <path d="M9 3V6M6.500 8H9.500V13M6.500 13.500H12" stroke="white" strokeWidth="2" />
        </Icon>
        <div className="mr-[15px] ml-auto flex h-[29px] w-[90px] items-center justify-center border-2 border-[#c6c6c6] bg-[#e6e6e6] text-[18px] text-[#7c7c7c]">OK</div>
        <div className="mr-[16px] flex h-[29px] w-[90px] items-center justify-center border-2 border-[#c6c6c6] bg-[#e6e6e6] text-[18px] text-[#7c7c7c]">Cancel</div>
      </div>
    </div>
  );
}

function ViewCube() {
  return (
    <svg viewBox="1780 230 110 105" className="mt-3 mr-[6px] h-[105px] w-[110px] shrink-0">
      <defs>
        <linearGradient id="face" x2="0" y2="1">
          <stop offset="0" stopColor="#ececec" />
          <stop offset="1" stopColor="#dcdcdd" />
        </linearGradient>
        <filter id="shade" x="-20%" y="-100%" width="140%" height="300%">
          <feGaussianBlur stdDeviation="2" />
        </filter>
      </defs>
      <ellipse cx="1830" cy="323" rx="42" ry="3" fill="#8d8d8d" filter="url(#shade)" />
      <rect x="1800" y="260.500" width="59.500" height="60" fill="url(#face)" stroke="#b9b9b9" />
      <rect x="1811" y="272" width="37" height="37" fill="#d9dcdf" />
      <text x="1808.500" y="297" textLength="42" lengthAdjust="spacingAndGlyphs" fontFamily="Liberation Sans" fontSize="17" fontWeight="bold" fill="#a2a6ab">FRONT</text>
      <path d="M1799 251V321" stroke="#6f6fea" strokeWidth="3" />
      <path d="M1799 322.500H1870" stroke="#f05a5a" strokeWidth="3" />
      <text x="1793.500" y="247" fontFamily="Liberation Sans" fontSize="15.500" fontWeight="bold" fill="#9090f7">Z</text>
      <text x="1873" y="327" fontFamily="Liberation Sans" fontSize="15" fill="#fb7777" stroke="#fb7777" strokeWidth=".7">X</text>
    </svg>
  );
}

function Canvas() {
  return (
    <div className="relative flex min-h-0 flex-1 bg-white">
      <ModelDrawing />
      <BrowserColumn />
      <div className="relative flex w-[1014px] shrink-0">
        <NavToolbar />
      </div>
      <div className="relative flex h-full flex-1 flex-col items-end pr-[6px]">
        <ViewCube />
        <RevolvePanel />
        <div className="mt-auto mr-[15px] mb-[9px] font-['Liberation_Sans',sans-serif] text-[17px] leading-[22px] font-bold whitespace-nowrap text-[#444]">
          1 Profile 1 Sketch Line | Min Distance : 0.773 mm
        </div>
      </div>
      <div className="absolute top-[453px] left-[572px] flex h-[33px] w-[161px] items-center bg-[#f1f1f1]">
        <Icon box="0 0 16 30" className="ml-[4px] h-[30px] w-[16px]">
          <path d="M3 1V30M8 3V30" stroke="#d4d4d4" strokeWidth="2.500" strokeDasharray="2 2" />
          <path d="M13 1V30" stroke="#ccc" strokeWidth="1.500" />
        </Icon>
        <div className="ml-px flex h-[30px] w-[104px] items-center border-2 border-[#d2d2d2] bg-white pl-[13px]">
          <span className="h-[21px] bg-[#0078d7] px-px font-['Liberation_Sans',sans-serif] text-[16px] leading-[22px] whitespace-nowrap text-white">360.0 deg</span>
        </div>
        <Icon box="0 0 4 20" className="ml-[17px] h-5 w-1">
          <circle cx="2" cy="2" r="2" fill="#777" />
          <circle cx="2" cy="10" r="2" fill="#777" />
          <circle cx="2" cy="18" r="2" fill="#777" />
        </Icon>
      </div>
    </div>
  );
}

/* ---------- slivers of the windows behind ---------- */

function LeftEdge() {
  return (
    <div className="relative flex w-3 shrink-0 flex-col overflow-hidden bg-[#515151]">
      <div className="h-[39px] shrink-0 bg-[#2b2422]" />
      <div className="flex h-[51px] shrink-0 items-center justify-end border-y border-[#3a3a3a] bg-[#4f4f4f]">
        <div className="h-[23px] w-1 rounded-l bg-[#4a0000]" />
      </div>
      <div className="h-[51px] shrink-0 bg-[#4a4a4a] pt-3">
        <div className="ml-px h-[28px] w-[3px] bg-[repeating-linear-gradient(#222_0_1px,#4a4a4a_1px_3px)]" />
      </div>
      <div className="flex h-[19px] shrink-0 items-center bg-[#353535] pl-[3px]">
        <Icon box="0 0 10 7" className="h-[7px] w-[10px]">
          <path d="M4 0L1 3.500L4 7M10 0L7 3.500L10 7" stroke="#ddd" strokeWidth="1.400" />
        </Icon>
      </div>
      <div className="mt-[103px] ml-1 h-[33px] w-2 shrink-0 rounded-l bg-[#2c2c2c]" />
      <div className="mt-[84px] ml-[10px] h-4 w-2 shrink-0 rounded-l-full bg-[#999]" />
      <div className="mt-[309px] ml-[3px] h-[53px] w-[9px] shrink-0 border border-r-0 border-[#222] bg-[linear-gradient(135deg,#f4f4f4_0_86%,#e00_86%_94%,#fff_94%)]" />
      <div className="mt-[9px] ml-[4px] h-[14px] w-[8px] shrink-0 border-2 border-r-0 border-black bg-white outline outline-[#bbb]" />
      <div className="mt-[18px] ml-[7px] h-5 w-[5px] shrink-0 border-2 border-r-0 border-black bg-[#b37f83]" />
      <div className="mt-[12px] ml-[3px] flex h-[27px] w-[9px] shrink-0 items-center justify-end rounded-l border border-[#666] bg-[#303030]">
        <div className="h-[10px] w-[2px] rounded-l bg-[#aaa]" />
      </div>
    </div>
  );
}

function Hamburger() {
  return (
    <Icon box="0 0 8 11" className="h-[11px] w-2">
      <path d="M0 .5H8M0 5.500H8M0 10H8" stroke="#bbb" strokeWidth="1.200" />
    </Icon>
  );
}

function RightEdge() {
  return (
    <div className="flex w-[18px] shrink-0 flex-col overflow-hidden bg-[#4f4f4f]">
      <div className="relative h-[198px] shrink-0 bg-[#1b3540]">
        <svg viewBox="0 0 18 198" className="absolute inset-0 h-full w-full">
          <path d="M0 40Q5 42 5 48V198H0Z" fill="#404040" />
          <g fill="#8fa3a9">
            <path d="M0 5L4 3L2 12L4 24L2 37L0 36ZM6 44L12 43L18 52V60L12 57Z" />
            <circle cx="11" cy="17" r="1.500" />
            <circle cx="14" cy="83" r="1.500" />
            <path d="M6 133L10 131L9 139L14 135L18 131V135L12 143L7 144ZM18 148L13 158L6 170L5 182L11 173L18 171Z" />
            <circle cx="12" cy="189" r="1" />
          </g>
          <circle cx="15" cy="164" r="2.500" fill="#1b3540" />
          <circle cx="10" cy="172" r="2" fill="#1b3540" />
        </svg>
      </div>
      <div className="flex h-[22px] shrink-0 items-center rounded-tr-lg border-b-2 border-[#2e2e2e] bg-[#474747]">
        <Icon box="0 0 8 8" className="mt-[3px] h-2 w-2">
          <path d="M0 0L7 7M7 0L0 7" stroke="#ccc" strokeWidth="1.500" />
        </Icon>
      </div>
      <div className="h-10 shrink-0 border-r-2 border-[#333] bg-[#404040] pt-[14px]">
        <Hamburger />
      </div>
      <div className="h-[493px] shrink-0 border-r-2 border-[#333] pt-[9px] pr-[8px]">
        <div className="h-[195px] rounded-tr border-t border-r border-[#666] pt-7">
          <div className="h-px bg-[#666]" />
        </div>
      </div>
      <div className="h-[46px] shrink-0 border-y-2 border-[#333] bg-[#404040] pt-[17px]">
        <Hamburger />
      </div>
      <div className="h-[145px] shrink-0 border-r-2 border-b-2 border-[#333]" />
      <div className="flex-1 border-l-4 border-[#4a4a4a] bg-[linear-gradient(115deg,#24383a_0_25%,#171b1e_26%_70%,#20292b_71%)]" />
    </div>
  );
}

/* ---------- taskbar ---------- */

function Task({ width, ml, bg = "", bar = "", extra = false, children }: { width: string; ml: string; bg?: string; bar?: string; extra?: boolean; children: React.ReactNode }) {
  return (
    <div className={"flex h-[60px] shrink-0 flex-col " + width + " " + ml + " " + bg}>
      <div className="flex flex-1 items-center justify-center pt-[2px]">{children}</div>
      <div className="flex h-[3px] gap-[1px]">
        {bar && <div className={"h-[3px] " + bar} />}
        {extra && <div className="h-[3px] flex-1 bg-[#71958a]" />}
      </div>
    </div>
  );
}

function Taskbar() {
  return (
    <div className="flex h-[60px] w-full shrink-0 bg-[#454545] font-['Open_Sans',sans-serif] text-white">
      <div className="flex w-[72px] shrink-0 items-center justify-center bg-[#404040]">
        <Icon box="0 0 24 24" className="h-6 w-6">
          <path d="M0 3.500L10 2V11.500H0ZM11 1.800L24 0V11.500H11ZM0 12.500H10V22L0 20.500ZM11 12.500H24V24L11 22.200Z" fill="white" />
        </Icon>
      </div>
      <div className="flex w-[516px] shrink-0 items-center border-2 border-[#5c5c5c] bg-[#323232] pl-4">
        <Icon box="0 0 25 25" className="h-[25px] w-[25px]">
          <circle cx="16" cy="9" r="8" stroke="white" strokeWidth="1.600" />
          <path d="M10 15L1 24" stroke="white" strokeWidth="1.600" />
        </Icon>
        <span className="mt-[3px] ml-[17px] text-[22px] tracking-[-0.3px] whitespace-nowrap text-[#d6d6d6]">Type here to search</span>
      </div>
      <Task width="w-[48px]" ml="ml-[12px]">
        <Icon box="0 0 24 24" className="h-6 w-6">
          <circle cx="12" cy="12" r="10.300" stroke="white" strokeWidth="2.800" />
        </Icon>
      </Task>
      <Task width="w-[48px]" ml="ml-[23px]">
        <Icon box="0 0 25 25" className="h-[25px] w-[25px]">
          <path d="M.7 0V3.500H16.300V0M.7 7H16.300V18H.7ZM.7 25V21.500H16.300V25M22.500 0V5M22.500 12V25" stroke="white" strokeWidth="1.300" />
          <path d="M20.500 7H24.500V11H20.500Z" fill="white" />
        </Icon>
      </Task>
      <Task width="w-[46px]" ml="ml-[22px]">
        <Icon box="0 0 34 34" className="mb-[2px] h-[34px] w-[34px]">
          <defs>
            <linearGradient id="fox" x1=".8" y1="0" x2=".3" y2="1">
              <stop offset="0" stopColor="#fff04a" />
              <stop offset=".45" stopColor="#ff9a1f" />
              <stop offset=".75" stopColor="#ff3d4d" />
              <stop offset="1" stopColor="#e31587" />
            </linearGradient>
          </defs>
          <path d="M22 0Q23 6 27 7Q34 12 34 19Q33 33 17 34Q1 33 0 19Q0 10 4 5L6 8L9 7Q12 7 13 9Q20 5 22 0Z" fill="url(#fox)" />
          <circle cx="17" cy="18" r="7.500" fill="#6f3bd1" />
          <path d="M2 10L8 8Q12 9 13 12L20 14Q14 16 12 18Q8 20 10 25Q3 22 2 10Z" fill="#ff8a1f" />
          <path d="M15 10Q25 9 25 19Q29 14 25 8Q20 5 15 10Z" fill="#ffba28" />
        </Icon>
      </Task>
      <Task width="w-[45px]" ml="ml-[14px]" bar="w-[32px] bg-[#90c0b0]" extra>
        <Icon box="0 0 34 34" className="h-[34px] w-[34px]">
          <circle cx="17" cy="17" r="17" fill="#db4437" />
          <path d="M2.300 8.500L9.600 21.300L17 25L17.500 34A17 17 0 0 1 2.300 8.500Z" fill="#109d58" />
          <path d="M17 9H32A17 17 0 0 1 16.500 34L24.400 20.500Z" fill="#ffcd40" />
          <circle cx="17" cy="17" r="8" fill="#f1f1f1" />
          <circle cx="17" cy="17" r="6.300" fill="#4285f4" />
        </Icon>
      </Task>
      <Task width="w-[45px]" ml="ml-[14px]" bar="w-[32px] bg-[#90c0b0]" extra>
        <Icon box="0 0 32 28" className="h-7 w-8">
          <path d="M0 1Q0 0 1 0H12L15 3L12 6H0Z" fill="#e0a010" />
          <path d="M0 5H13L16 2H32V27H0Z" fill="#fed46a" />
          <path d="M5 27V17Q5 15 7 15H25Q27 15 27 17V27H21V20H11V27Z" fill="#3e97d9" />
        </Icon>
      </Task>
      <Task width="w-[44px]" ml="ml-[14px]">
        <Icon box="0 0 34 34" className="ml-px h-[34px] w-[34px]">
          <path d="M1 33L3.500 24A16 16 0 1 1 10 30.500Z" fill="white" />
          <circle cx="17.500" cy="16.500" r="13.300" fill="#27c14f" />
          <path d="M3.500 30.500L6 22L12 28Z" fill="#27c14f" />
          <path d="M10 13Q11 8 14 10L15.500 14L14 16.500Q16 20 20 21.500L22.500 19L26 21Q26 25 22 25.500Q12 24 10 13Z" fill="white" />
        </Icon>
      </Task>
      <Task width="w-[44px]" ml="ml-[15px]">
        <div className="ml-[2px] flex h-[33px] w-[33px] items-center justify-center rounded-[45%] bg-[#0a9eea] text-[26px] leading-none font-bold shadow-[inset_3px_3px_0_#0b8fd0]">
          S
        </div>
      </Task>
      <Task width="w-[44px]" ml="ml-[15px]">
        <Icon box="0 0 34 34" className="ml-[2px] h-[34px] w-[34px]">
          <circle cx="17" cy="17" r="17" fill="#1f98d4" />
          <path d="M6 17L27 9L23 27L16 22L13 26L12 20Z" fill="white" />
          <path d="M12 20L23 12L15 21L13 26Z" fill="#c2dbea" />
        </Icon>
      </Task>
      <Task width="w-[45px]" ml="ml-[16px]" bar="w-full bg-[#90c0b0]">
        <Icon box="0 0 38 36" className="ml-px h-9 w-[38px]">
          <circle cx="19" cy="6" r="6" fill="#7b83eb" />
          <circle cx="30" cy="8" r="4" fill="#5059c9" />
          <path d="M26 13H35V26Q31 31 26 28Z" fill="#5059c9" />
          <path d="M10 13H28V27Q25 33 19 32Q10 31 10 24Z" fill="#7b83eb" />
          <rect x="0" y="8" width="18" height="18" rx="1.500" fill="#4550b5" />
          <text x="4.500" y="22" fontFamily="Open Sans" fontSize="14" fontWeight="bold" fill="white">T</text>
          <circle cx="30" cy="28" r="7" fill="#8cbd18" stroke="white" strokeWidth="1.300" />
          <path d="M26.500 28L29 30.500L33.500 25.500" stroke="white" strokeWidth="2" />
        </Icon>
      </Task>
      <Task width="w-[40px]" ml="ml-[15px]">
        <div className="relative mb-[3px] ml-[2px] flex h-7 w-7 items-center justify-center rounded-[3px] bg-[#6f86cf]">
          <FaDiscord className="h-[20px] w-[23px]" />
          <Icon box="0 0 8 6" className="absolute right-0 -bottom-[4px] h-[6px] w-2">
            <path d="M0 0H8V6Z" fill="#5f74bd" />
          </Icon>
        </div>
      </Task>
      <Task width="w-[45px]" ml="ml-[75px]" bar="w-[31px] bg-[#90c0b0]" extra>
        <Icon box="0 0 32 32" className="h-8 w-8">
          <rect width="32" height="32" rx="1.500" fill="#28ace6" />
          <path d="M16 22L24 14L32 22V32H16Z" fill="#4f79bd" />
          <path d="M0 17L7 11L14 14L29 32H0Z" fill="#15498b" />
          <circle cx="21" cy="8" r="3" fill="white" />
        </Icon>
      </Task>
      <Task width="w-[44px]" ml="ml-[14px]" bar="w-full bg-[#90c0b0]">
        <div className="mb-[2px] flex h-8 w-8 items-center justify-center rounded-md bg-[conic-gradient(from_0deg,#ff2020,#ff9010,#ffd020,#a0d040,#30c8c0,#7060f0,#d040d0,#ff2060,#ff2020)]">
          <Icon box="0 0 25 19" className="h-[19px] w-[25px]">
            <path d="M17 14.500Q14 17.500 9 17.500Q2 17.500 1.500 11Q2 5.500 8 5.500Q11 5.500 14 10" stroke="white" strokeWidth="2" />
            <path d="M6 6Q9 1.500 15 1.500Q23 2 23.500 9.500Q23 17 16 17Q12 16 9 11Q7 9 6.500 10.500Q6 13 9 13.500" stroke="white" strokeWidth="2" />
            <path d="M11 8Q12 5.500 15.500 6Q19 7 19 10Q18.500 13 15 12.500" stroke="white" strokeWidth="2" />
          </Icon>
        </div>
      </Task>
      <Task width="w-[44px]" ml="ml-[14px]" bar="w-full bg-[#90c0b0]">
        <div className="mb-[2px] flex h-8 w-8 items-center justify-center rounded-md bg-[#300000] pb-px text-[19px] leading-none font-bold text-[#ff9b08]">Ai</div>
      </Task>
      <Task width="w-[56px]" ml="ml-[8px]" bg="bg-[#6d6d6d]" bar="w-full bg-[#90c0b0]">
        <div className="flex h-9 w-9 flex-col items-center bg-gradient-to-br from-[#fff] to-[#f3d6bb]">
          <span className="mt-[2px] font-['Liberation_Sans'] text-[27px] leading-[25px] font-bold text-[#c87e33]">F</span>
          <span className="mr-[4px] self-end font-['Liberation_Sans'] text-[7px] leading-[8px] font-bold text-[#e5752c]">360</span>
        </div>
      </Task>
      <div className="flex h-[60px] items-center">
        <Icon box="0 0 18 10" className="ml-[14px] h-[10px] w-[18px]">
          <path d="M1 9L9 1L17 9" stroke="white" strokeWidth="1.500" />
        </Icon>
        <div className="relative ml-[15px] flex h-6 w-6 items-start">
          <FaDropbox className="h-[19px] w-6" />
          <span className="absolute top-[9px] left-0 flex h-[14px] w-[14px] items-center justify-center rounded-[3px] bg-[#d8042c] text-[12px] leading-none font-bold">1</span>
        </div>
        <Icon box="0 0 19 19" className="mt-[3px] ml-[15px] h-[19px] w-[19px]">
          <path d="M1 18Q2 2 18 1M5.500 18Q6 6.500 18 5.500M10 18Q10.500 11 18 10" stroke="#ddd" strokeWidth="1.300" />
          <circle cx="16" cy="16" r="1.800" fill="white" />
        </Icon>
        <Icon box="0 0 26 22" className="mt-[4px] ml-[13px] h-[22px] w-[26px]">
          <circle cx="12" cy="7" r="7" fill="#9d9d9d" />
          <path d="M4 16Q-2 12 2 8Q5 5 8 6L20 14V16Z" fill="#dcdcdc" />
          <circle cx="17" cy="15" r="6.500" fill="#d9222a" />
          <path d="M14.500 12.500L19.500 17.500M19.500 12.500L14.500 17.500" stroke="white" strokeWidth="1.500" />
        </Icon>
        <Icon box="0 0 24 20" className="ml-[10px] h-5 w-6">
          <path d="M1 7H5L10 1.500V18.500L5 13H1Z" stroke="white" strokeWidth="1.300" />
          <path d="M13 7Q15 10 13 13" stroke="white" strokeWidth="1.200" />
          <path d="M16 4.500Q20 10 16 15.500M19 2Q25 10 19 18" stroke="#a0a0a0" strokeWidth="1.200" />
        </Icon>
        <span className="mt-px ml-[15px] w-[37px] text-[17px] tracking-[-0.5px]">ENG</span>
        <div className="ml-[14px] flex w-[88px] flex-col items-center text-[18px] leading-[28px] tracking-[-0.55px] whitespace-nowrap">
          <span>3:40 pm</span>
          <span>21/5/2021</span>
        </div>
        <div className="relative mt-[6px] ml-[27px] h-[36px] w-[36px]">
          <Icon box="0 0 24 24" className="h-6 w-6">
            <path d="M0 0H24V18H14L10 24L8 18H0Z" fill="white" />
            <path d="M5 5H19M5 9H19M5 13H15" stroke="#444" strokeWidth="1.400" />
          </Icon>
          <span className="absolute right-0 bottom-0 flex h-6 w-6 items-center justify-center rounded-full border border-[#aaa] bg-[#333] text-[16px] leading-none font-semibold">4</span>
        </div>
      </div>
      <div className="mr-[6px] ml-auto w-px bg-[#8a8a8a]" />
    </div>
  );
}

export default function App() {
  return (
    <div className="flex h-[1080px] w-[1920px] flex-col overflow-hidden bg-[#454545]">
      <div className="flex h-[1020px] shrink-0">
        <LeftEdge />
        <div className="flex w-[1890px] shrink-0 flex-col">
          <div className="h-px w-full shrink-0 bg-gradient-to-r from-[#3a4456] via-[#b07a6a] to-[#3a4456]" />
          <TitleBar />
          <TabStrip />
          <Ribbon />
          <Canvas />
        </div>
        <RightEdge />
      </div>
      <Taskbar />
    </div>
  );
}
